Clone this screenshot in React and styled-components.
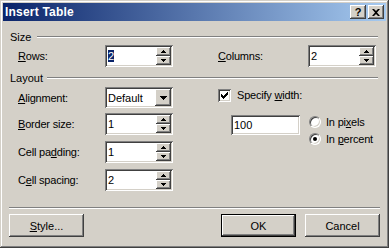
import React from 'react';
import styled, { createGlobalStyle } from 'styled-components';

const GlobalStyle = createGlobalStyle`
  html, body {
    margin: 0;
    padding: 0;
    background: #d4d0c8;
  }
  body {
    font-family: "Liberation Sans", Arial, sans-serif;
    font-size: 11px;
    color: #000;
  }
`;

const raised = `
  box-shadow: inset -1px -1px #404040, inset 1px 1px #ffffff,
    inset -2px -2px #808080, inset 2px 2px #d4d0c8;
`;

const sunken = `
  box-shadow: inset 1px 1px #808080, inset -1px -1px #ffffff,
    inset 2px 2px #404040, inset -2px -2px #d4d0c8;
`;

const Window = styled.div`
  box-sizing: border-box;
  width: 389px;
  height: 248px;
  padding: 3px;
  background: #d4d0c8;
  box-shadow: inset -1px -1px #404040, inset 1px 1px #d4d0c8,
    inset -2px -2px #808080, inset 2px 2px #ffffff;
  display: flex;
  flex-direction: column;
`;

const TitleBar = styled.div`
  height: 18px;
  display: flex;
  align-items: center;
  padding: 0 2px 0 2px;
  background: linear-gradient(to right, #0a246a, #a6caf0);
`;

const Title = styled.span`
  flex: 1;
  color: #fff;
  font-weight: bold;
  font-size: 12px;
  letter-spacing: 0.2px;
`;

const CaptionButton = styled.button`
  box-sizing: border-box;
  width: 16px;
  height: 14px;
  margin-left: ${(p) => (p.$first ? 0 : 2)}px;
  padding: 0;
  border: none;
  background: #d4d0c8;
  ${raised}
  display: flex;
  align-items: center;
  justify-content: center;
  font-family: "Liberation Sans", Arial, sans-serif;
  font-weight: bold;
  font-size: 11px;
  line-height: 1;
  color: #000;
`;

const Body = styled.div`
  flex: 1;
  display: flex;
  flex-direction: column;
  padding: 0 6px;
`;

const GroupHeader = styled.div`
  display: flex;
  align-items: center;
  height: 12px;
  margin: ${(p) => p.$top}px 2px 0 1px;
`;

const GroupLine = styled.div`
  flex: 1;
  height: 0;
  margin-left: ${(p) => p.$gap}px;
  border-top: 1px solid #808080;
  border-bottom: 1px solid #ffffff;
`;

const FieldRow = styled.div`
  display: flex;
  align-items: center;
  height: ${(p) => p.$h || 22}px;
  margin-top: ${(p) => p.$top || 0}px;
`;

const Label = styled.label`
  width: ${(p) => p.$w}px;
  flex-shrink: 0;
  letter-spacing: -0.2px;
  white-space: nowrap;
`;

const SizeRow = styled(FieldRow)`
  padding-left: 9px;
`;

const Gap = styled.div`
  width: ${(p) => p.$w}px;
  flex-shrink: 0;
`;

const Field = styled.div`
  box-sizing: border-box;
  position: relative;
  width: ${(p) => p.$w || 68}px;
  height: ${(p) => p.$h || 22}px;
  padding: 2px 2px 2px 3px;
  background: #fff;
  ${sunken}
  display: flex;
  align-items: center;
`;

const Selected = styled.span`
  background: #0a246a;
  color: #fff;
`;

const SpinButtons = styled.div`
  position: absolute;
  top: 2px;
  right: 2px;
  bottom: 2px;
  width: 15px;
  display: flex;
  flex-direction: column;
`;

const SpinButton = styled.div`
  flex: 1;
  background: #d4d0c8;
  ${raised}
  display: flex;
  align-items: center;
  justify-content: center;
`;

const DropButton = styled.div`
  position: absolute;
  top: 2px;
  right: 2px;
  bottom: 2px;
  width: 16px;
  background: #d4d0c8;
  ${raised}
  display: flex;
  align-items: center;
  justify-content: center;
`;

const LayoutBody = styled.div`
  display: flex;
  padding-left: 9px;
`;

const Column = styled.div`
  display: flex;
  flex-direction: column;
  width: ${(p) => p.$w}px;
  margin-top: ${(p) => p.$top}px;
`;

const CheckRow = styled.div`
  display: flex;
  align-items: center;
  height: 14px;
`;

const CheckBox = styled.div`
  box-sizing: border-box;
  width: 13px;
  height: 13px;
  margin-right: 6px;
  background: #fff;
  ${sunken}
  display: flex;
  align-items: center;
  justify-content: center;
`;

const WidthRow = styled.div`
  display: flex;
  margin-top: 13px;
  padding-left: 13px;
`;

const Radios = styled.div`
  display: flex;
  flex-direction: column;
  gap: 5px;
  margin: 1px 0 0 9px;
`;

const RadioRow = styled.div`
  display: flex;
  align-items: center;
  height: 12px;
  white-space: nowrap;
  letter-spacing: -0.2px;
`;

const RadioCircle = styled.div`
  box-sizing: border-box;
  width: 12px;
  height: 12px;
  margin-right: 5px;
  border-radius: 50%;
  background: #fff;
  border: 1px solid;
  border-color: #808080 #ffffff #ffffff #808080;
  box-shadow: inset 1px 1px #404040, inset -1px -1px #d4d0c8;
  display: flex;
  align-items: center;
  justify-content: center;
`;

const Dot = styled.div`
  width: 4px;
  height: 4px;
  border-radius: 50%;
  background: #000;
`;

const Separator = styled.div`
  margin: 16px 0 0 0;
  border-top: 1px solid #808080;
  border-bottom: 1px solid #ffffff;
`;

const Footer = styled.div`
  display: flex;
  margin-top: 5px;
`;

const PushButton = styled.button`
  box-sizing: border-box;
  width: 75px;
  height: 23px;
  margin-left: ${(p) => p.$ml || 0}px;
  padding: 0;
  background: #d4d0c8;
  font-family: "Liberation Sans", Arial, sans-serif;
  font-size: 11px;
  color: #000;
  border: ${(p) => (p.$default ? '1px solid #000' : 'none')};
  ${raised}
`;

const UpArrow = () => (
  <svg width="5" height="3" viewBox="0 0 5 3" shapeRendering="crispEdges">
    <path d="M2 0h1v1h1v1h1v1H0V2h1V1h1z" fill="#000" />
  </svg>
);

const DownArrow = () => (
  <svg width="5" height="3" viewBox="0 0 5 3" shapeRendering="crispEdges">
    <path d="M0 0h5v1H4v1H3v1H2V2H1V1H0z" fill="#000" />
  </svg>
);

const ComboArrow = () => (
  <svg width="7" height="4" viewBox="0 0 7 4" shapeRendering="crispEdges">
    <path d="M0 0h7v1H6v1H5v1H4v1H3V3H2V2H1V1H0z" fill="#000" />
  </svg>
);

const Spin = ({ value, selected, w }) => (
  <Field $w={w}>
    {selected ? <Selected>{value}</Selected> : value}
    <SpinButtons>
      <SpinButton>
        <UpArrow />
      </SpinButton>
      <SpinButton>
        <DownArrow />
      </SpinButton>
    </SpinButtons>
  </Field>
);

export default function App() {
  return (
    <>
      <GlobalStyle />
      <Window>
        <TitleBar>
          <Title>Insert Table</Title>
          <CaptionButton $first>?</CaptionButton>
          <CaptionButton>
            <svg width="8" height="7" viewBox="0 0 8 7">
              <path d="M0 0h2l2 2 2-2h2L5 3.5 8 7H6L4 5 2 7H0l3-3.5z" fill="#000" />
            </svg>
          </CaptionButton>
        </TitleBar>
        <Body>
          <GroupHeader $top={10}>
            Size
            <GroupLine $gap={6} />
          </GroupHeader>
          <SizeRow $top={2}>
            <Label $w={87}>
              <u>R</u>ows:
            </Label>
            <Spin value="2" selected />
            <Gap $w={45} />
            <Label $w={90}>
              <u>C</u>olumns:
            </Label>
            <Spin value="2" />
          </SizeRow>

          <GroupHeader $top={5}>
            Layout
            <GroupLine $gap={4} />
          </GroupHeader>
          <LayoutBody>
            <Column $w={155} $top={3}>
              <FieldRow $h={21}>
                <Label $w={87}>
                  <u>A</u>lignment:
                </Label>
                <Field $h={21}>
                  Default
                  <DropButton>
                    <ComboArrow />
                  </DropButton>
                </Field>
              </FieldRow>
              <FieldRow $top={5}>
                <Label $w={87}>
                  <u>B</u>order size:
                </Label>
                <Spin value="1" />
              </FieldRow>
              <FieldRow $top={6}>
                <Label $w={87}>
                  Cell pa<u>d</u>ding:
                </Label>
                <Spin value="1" />
              </FieldRow>
              <FieldRow $top={6}>
                <Label $w={87}>
                  C<u>e</u>ll spacing:
                </Label>
                <Spin value="2" />
              </FieldRow>
            </Column>
            <Gap $w={45} />
            <Column $w={160} $top={4}>
              <CheckRow>
                <CheckBox>
                  <svg width="7" height="7" viewBox="0 0 7 7" shapeRendering="crispEdges">
                    <path
                      d="M6 0h1v1H6zM5 1h2v1H5zM0 2h1v1H0zM4 2h3v1H4zM0 3h2v1H0zM3 3h3v1H3zM0 4h5v1H0zM1 5h3v1H1zM2 6h1v1H2z"
                      fill="#000"
                    />
                  </svg>
                </CheckBox>
                <Label as="span">
                  Specify <u>w</u>idth:
                </Label>
              </CheckRow>
              <WidthRow>
                <Field $w={69} $h={20}>
                  100
                </Field>
                <Radios>
                  <RadioRow>
                    <RadioCircle />
                    <span>
                      In pi<u>x</u>els
                    </span>
                  </RadioRow>
                  <RadioRow>
                    <RadioCircle>
                      <Dot />
                    </RadioCircle>
                    <span>
                      In <u>p</u>ercent
                    </span>
                  </RadioRow>
                </Radios>
              </WidthRow>
            </Column>
          </LayoutBody>

          <Separator />
          <Footer>
            <PushButton>
              <u>S</u>tyle...
            </PushButton>
            <PushButton $default $ml={137}>
              OK
            </PushButton>
            <PushButton $ml={9}>Cancel</PushButton>
          </Footer>
        </Body>
      </Window>
    </>
  );
}
